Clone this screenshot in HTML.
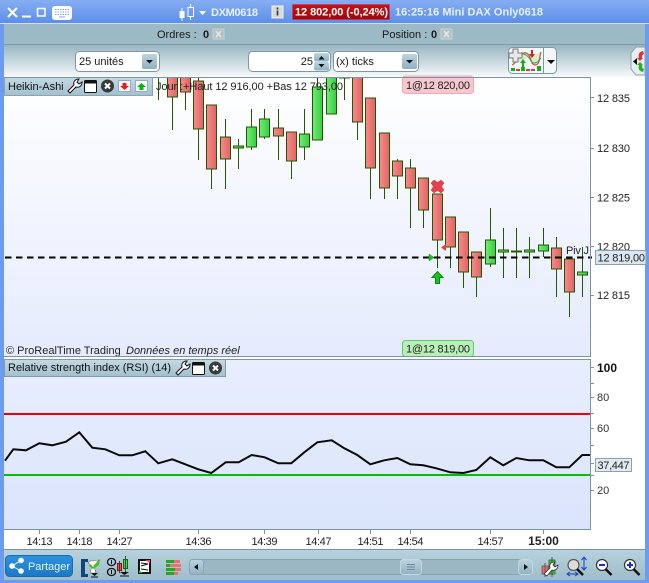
<!DOCTYPE html>
<html><head><meta charset="utf-8"><style>
html,body{margin:0;padding:0;background:#6b9cf0;overflow:hidden}
svg{display:block;font-family:"Liberation Sans",sans-serif}
text{white-space:pre}
</style></head><body>
<svg width="649" height="583" viewBox="0 0 649 583" xmlns="http://www.w3.org/2000/svg">
<defs>
<linearGradient id="top" x1="0" y1="0" x2="0" y2="1"><stop offset="0" stop-color="#86aef2"/><stop offset="1" stop-color="#5c8fea"/></linearGradient>
<linearGradient id="r3" x1="0" y1="0" x2="0" y2="1"><stop offset="0" stop-color="#9ab6c3"/><stop offset=".5" stop-color="#c6d7de"/><stop offset="1" stop-color="#f8fafb"/></linearGradient>
<linearGradient id="ch" x1="0" y1="0" x2="0" y2="1"><stop offset="0" stop-color="#ffffff"/><stop offset="1" stop-color="#e5ebfd"/></linearGradient>
<linearGradient id="rs" x1="0" y1="0" x2="0" y2="1"><stop offset="0" stop-color="#e8eefe"/><stop offset="1" stop-color="#dae4fb"/></linearGradient>
<linearGradient id="leg" x1="0" y1="0" x2="0" y2="1"><stop offset="0" stop-color="#c4dae4"/><stop offset="1" stop-color="#a2c0cd"/></linearGradient>
<linearGradient id="ft" x1="0" y1="0" x2="0" y2="1"><stop offset="0" stop-color="#b6d2de"/><stop offset="1" stop-color="#9ebcc9"/></linearGradient>
<linearGradient id="btn" x1="0" y1="0" x2="0" y2="1"><stop offset="0" stop-color="#bcd4df"/><stop offset="1" stop-color="#8fb1c2"/></linearGradient>
<linearGradient id="blu" x1="0" y1="0" x2="0" y2="1"><stop offset="0" stop-color="#2c93e0"/><stop offset="1" stop-color="#1c78c4"/></linearGradient>
<linearGradient id="R" x1="0" y1="0" x2="1" y2="0"><stop offset="0" stop-color="#fb8a8a"/><stop offset="1" stop-color="#dd6464"/></linearGradient>
<linearGradient id="G" x1="0" y1="0" x2="1" y2="0"><stop offset="0" stop-color="#74ec74"/><stop offset="1" stop-color="#35cc45"/></linearGradient>
<linearGradient id="pr" x1="0" y1="0" x2="0" y2="1"><stop offset="0" stop-color="#c41414"/><stop offset="1" stop-color="#9c0808"/></linearGradient>
<clipPath id="cc"><rect x="5" y="78" width="585" height="278"/></clipPath>
</defs>

<!-- frame -->
<rect width="649" height="583" fill="#6b9cf0"/>
<rect width="649" height="23" fill="url(#top)"/>
<rect x="0" y="23" width="649" height="1" fill="#cfe0f5"/>
<rect x="4" y="24" width="641" height="20" fill="#9cb9c6"/>
<rect x="4" y="44" width="641" height="1" fill="#7f9baa"/>
<rect x="4" y="45" width="641" height="32" fill="url(#r3)"/>
<rect x="4" y="77" width="641" height="473" fill="#fff"/>
<rect x="4" y="550" width="641" height="30" fill="url(#ft)"/>

<!-- title bar -->
<g stroke="#fff" fill="none">
<path d="M8 8l9 9M17 8l-9 9" stroke-width="2"/>
<path d="M22 16.500h9" stroke-width="2"/>
<rect x="37.500" y="8.500" width="7.500" height="7.500" stroke-width="1.500"/>
</g>
<rect x="52" y="6" width="20" height="14" rx="3" fill="#fff"/>
<path d="M55 9.500h14M55 12h14M55 14.500h14" stroke="#7ba4ec" stroke-width="1" stroke-dasharray="1.500 1"/>
<path d="M59 17h6" stroke="#7ba4ec"/>
<rect x="179.500" y="11" width="5" height="7" fill="#fff"/><path d="M182 8v13" stroke="#fff"/>
<rect x="188" y="7.500" width="5.500" height="9" fill="none" stroke="#fff"/><path d="M190.500 4v3M190.500 17v3" stroke="#fff"/>
<path d="M199 11h7l-3.500 4z" fill="#fff"/>
<text x="211" y="16" font-size="11" font-weight="bold" fill="#e8f0fc" textLength="47">DXM0618</text>
<rect x="272" y="6" width="11" height="12" fill="#d9d9d9" stroke="#f0f0f0"/>
<path d="M277.500 7.500v2M277.500 10.500v5" stroke="#333" stroke-width="1.600"/>
<rect x="292.500" y="4.500" width="97" height="15" fill="url(#pr)" stroke="#e26" stroke-opacity=".5"/>
<text x="295" y="15.500" font-size="11" font-weight="bold" fill="#fff" textLength="93">12 802,00 (-0,24%)</text>
<text x="395" y="15.500" font-size="11" font-weight="bold" fill="#e8f0fc" textLength="148">16:25:16 Mini DAX Only0618</text>

<!-- row 2 -->
<text x="157" y="38" font-size="11" fill="#1a1a1a">Ordres :</text>
<text x="203" y="38" font-size="11" font-weight="bold" fill="#1a1a1a">0</text>
<rect x="213" y="29" width="11" height="10" fill="#b4c0c2" stroke="#cdd3d3"/><path d="M216 31l5 6M221 31l-5 6" stroke="#dfe3e3" stroke-width="2"/>
<text x="382" y="38" font-size="11" fill="#1a1a1a">Position :</text>
<text x="431" y="38" font-size="11" font-weight="bold" fill="#1a1a1a">0</text>
<rect x="441" y="29" width="11" height="10" fill="#b4c0c2" stroke="#cdd3d3"/><path d="M444 31l5 6M449 31l-5 6" stroke="#dfe3e3" stroke-width="2"/>

<!-- row 3 -->
<rect x="75.500" y="51.500" width="84" height="20" rx="4" fill="#fff" stroke="#7f97a5"/>
<text x="79" y="65" font-size="11" fill="#1a1a1a">25 unités</text>
<rect x="142" y="54" width="15" height="15" rx="2" fill="url(#btn)"/><path d="M146 60h7l-3.500 3.500z" fill="#111"/>
<rect x="248.500" y="51.500" width="82" height="20" rx="4" fill="#fff" stroke="#7f97a5"/>
<text x="313" y="65" font-size="11" fill="#1a1a1a" text-anchor="end">25</text>
<rect x="314" y="53" width="15" height="8.500" rx="2" fill="url(#btn)"/><rect x="314" y="62" width="15" height="8.500" rx="2" fill="url(#btn)"/>
<path d="M318.500 59.500h6l-3-3.500zM318.500 64h6l-3 3.500z" fill="#111"/>
<rect x="333.500" y="51.500" width="85" height="20" rx="4" fill="#fff" stroke="#7f97a5"/>
<text x="336" y="65" font-size="11" fill="#1a1a1a">(x) ticks</text>
<rect x="402" y="54" width="15" height="15" rx="2" fill="url(#btn)"/><path d="M406 60h7l-3.500 3.500z" fill="#111"/>
<!-- indicator button -->
<rect x="508.500" y="47.500" width="48" height="26" rx="4" fill="#f4f7f8" stroke="#7f97a5"/>
<path d="M543.500 48v25" stroke="#7f97a5"/>
<path d="M547 60h8l-4 4z" fill="#111"/>
<rect x="511" y="68" width="4" height="3" fill="#16b016"/><rect x="516" y="69" width="4" height="2" fill="#e03a3a"/><rect x="521" y="67" width="4" height="4" fill="#16b016"/><rect x="526" y="69" width="4" height="2" fill="#e03a3a"/><rect x="531" y="69" width="4" height="2" fill="#e03a3a"/><rect x="537" y="66" width="4" height="5" fill="#16b016"/>
<path d="M512 65c5-2 8-14 14-12s4 12 9 12 4-7 6-13" fill="#c8e8b0" fill-opacity=".6" stroke="#d05050" stroke-width="1.200"/>
<path d="M513 62c6-6 8-10 13-7s5 9 9 8 4-3 6-5" fill="none" stroke="#30a030" stroke-width="1"/>
<path d="M513 49h5v4h4v5h-4v4h-5v-4h-4v-5h4z" fill="#e8e8e8" stroke="#777" stroke-width="1"/>
<path d="M522 67v-4h-2l3-4 3 4h-2v4z" fill="#10b010"/>
<path d="M531 50v4h-2l3 4 3-4h-2v-4z" fill="#e02020"/>
<!-- right-side tab -->
<path d="M645 47h-9l-5 6v16l5 6h9z" fill="#e8eef0" stroke="#8aa0ad"/>
<path d="M637 58v7l-4-3.500z" fill="#111"/>
<path d="M643 51c-4 1-5 3-4 7h-2l3 3 3-3h-1c0-2 0-3 2-4z" fill="#e03030"/>
<path d="M643 72c-4-1-5-3-4-7h-2l3-3 3 3h-1c0 2 0 3 2 4z" fill="#20b020"/>

<!-- chart area -->
<rect x="4" y="77" width="586" height="279" fill="url(#ch)"/>
<rect x="4" y="359" width="586" height="171" fill="url(#rs)"/>

<!-- candles -->
<g clip-path="url(#cc)" stroke="#235800" stroke-width="1" shape-rendering="crispEdges">
<path fill="none" d="M158.500 78v22M172.500 78v52M185.500 78v32M198.500 78v82M211.500 105v84M225.500 119v70M238.500 139v30M251.500 109v41M264.500 109v30M278.500 109v51M291.500 132v47M304.500 109v51M317.500 78v62M331.500 78v36M344.500 78v22M357.500 78v62M370.500 98v101M384.500 133v66M397.500 159v40M410.500 159v69M423.500 178v50M437.500 194v74M450.500 217v51M463.500 232v56M476.500 252v45M490.500 208v59M503.500 228v50M516.500 228v50M529.500 237v41M543.500 228v29M556.500 237v60M569.500 259v58M582.500 247v50"/>
<g fill="url(#R)">
<rect x="167.500" y="70" width="10" height="27"/><rect x="180.500" y="70" width="10" height="22"/><rect x="193.500" y="81" width="10" height="48"/><rect x="206.500" y="105" width="10" height="64"/><rect x="220.500" y="137" width="10" height="22"/><rect x="273.500" y="128" width="10" height="8"/><rect x="286.500" y="132" width="10" height="29"/><rect x="352.500" y="70" width="10" height="52"/><rect x="365.500" y="98" width="10" height="70"/><rect x="379.500" y="133" width="10" height="55"/><rect x="392.500" y="161" width="10" height="15"/><rect x="405.500" y="168" width="10" height="20"/><rect x="418.500" y="178" width="10" height="32"/><rect x="432.500" y="194" width="10" height="46"/><rect x="445.500" y="217" width="10" height="30"/><rect x="458.500" y="232" width="10" height="40"/><rect x="471.500" y="252" width="10" height="25"/><rect x="551.500" y="248" width="10" height="21"/><rect x="564.500" y="259" width="10" height="33"/>
</g>
<g fill="url(#G)">
<rect x="233.500" y="146" width="10" height="2"/><rect x="246.500" y="127" width="10" height="20"/><rect x="259.500" y="119" width="10" height="18"/><rect x="299.500" y="134" width="10" height="13"/><rect x="312.500" y="87" width="10" height="53"/><rect x="326.500" y="70" width="10" height="44"/><rect x="339.500" y="70" width="10" height="8"/><rect x="485.500" y="240" width="10" height="24"/><rect x="498.500" y="250" width="10" height="2"/><rect x="511.500" y="251" width="10" height="1"/><rect x="524.500" y="250" width="10" height="2"/><rect x="538.500" y="245" width="10" height="6"/><rect x="577.500" y="272" width="10" height="3"/>
</g>
</g>

<!-- dashed line, markers -->
<path d="M5 257.500H592" stroke="#000" stroke-width="2" stroke-dasharray="6.500 4.500"/>
<path d="M429 254l5 3.500-5 3.500z" fill="#20c020" stroke="#109010" stroke-width=".5"/>
<path d="M446 244l-5 3.500 5 3.500z" fill="#e04040"/>
<path d="M437.500 271.500l-5.500 6h3.500v6h4v-6h3.500z" fill="#14c414" stroke="#0a8a0a"/>
<path d="M434 180l3.500 2.500 3.500-2.500 3 3-2.500 3.500 2.500 3.500-3 3-3.500-2.500-3.500 2.500-3-3 2.500-3.500-2.500-3.500z" fill="#e8404a" stroke="#d02030" stroke-width=".5"/>
<text x="566" y="254" font-size="11" fill="#222" textLength="23">Piv J</text>

<!-- legend strip 1 -->
<rect x="4.500" y="77.500" width="148" height="18" fill="url(#leg)" stroke="#8ba4b2"/>
<text x="8" y="90" font-size="11" fill="#111">Heikin-Ashi</text>
<path d="M68 91l6-6c-1-3 1-6 5-6l-2 3 2 2 3-2c0 4-3 6-6 5l-6 6z" fill="#fff" stroke="#111"/>
<rect x="84.500" y="80.500" width="12" height="12" rx="1" fill="#fff" stroke="#111"/><rect x="84.500" y="80.500" width="12" height="3" fill="#111"/>
<circle cx="107.500" cy="86" r="6.500" fill="#3a3a3a"/><path d="M105 83.500l5 5M110 83.500l-5 5" stroke="#fff" stroke-width="2"/>
<rect x="118.500" y="80.500" width="12" height="11" fill="#f4f8f8" stroke="#9ab"/><path d="M122.500 83v3h-2.500l4.500 4 4.500-4h-2.500v-3z" fill="#e02020"/>
<rect x="135.500" y="80.500" width="12" height="11" fill="#f4f8f8" stroke="#9ab"/><path d="M139.500 90v-3h-2.500l4.500-4 4.500 4h-2.500v3z" fill="#10b010"/>
<text x="156" y="90" font-size="11" fill="#222" textLength="187">Jour :+Haut 12 916,00 +Bas 12 793,00</text>

<!-- order labels -->
<rect x="402.500" y="76" width="71" height="17.500" rx="3" fill="#f5c8cf" stroke="#f3a9b2"/>
<text x="406" y="89" font-size="11" fill="#222" textLength="64">1@12 820,00</text>
<rect x="402.500" y="340.500" width="71" height="16" rx="3" fill="#b9efb9" stroke="#62c862"/>
<text x="406" y="352.500" font-size="11" fill="#222" textLength="64">1@12 819,00</text>
<text x="6" y="354" font-size="11" fill="#222">© ProRealTime Trading</text>
<text x="126" y="354" font-size="11" font-style="italic" fill="#222">Données en temps réel</text>

<!-- frames -->
<g fill="none" stroke="#7a93a5" shape-rendering="crispEdges">
<path d="M4 77.500H590.500V356.500H4"/>
<path d="M4 359.500H590.500V529.500H4"/>
<path d="M590 97.500h4M590 148.500h4M590 197.500h4M590 246.500h4M590 295.500h4"/>
<path d="M590 367.500h4M590 383.500h4M590 397.500h4M590 413.500h4M590 428.500h4M590 445.500h4M590 475.500h4M590 490.500h4M590 463.500h4"/>
<path d="M39.500 530v4M79.500 530v4M119.500 530v4M198.500 530v4M264.500 530v4M318.500 530v4M370.500 530v4M410.500 530v4M490.500 530v4M543.500 530v4"/>
<path d="M4 549.500H645"/>
</g>

<!-- price axis -->
<g font-size="11" fill="#222">
<text x="597" y="102" textLength="33">12 835</text><text x="597" y="152" textLength="33">12 830</text><text x="597" y="201.500" textLength="33">12 825</text><text x="597" y="250.500" textLength="33">12 820</text><text x="597" y="299" textLength="33">12 815</text>
</g>
<rect x="595.500" y="250.500" width="50.500" height="14" fill="#dbe6f0" stroke="#8aa2b2"/>
<text x="597.500" y="261.500" font-size="11" fill="#222" textLength="47.500">12 819,00</text>

<!-- RSI -->
<rect x="4.500" y="359.500" width="221" height="17" fill="url(#leg)" stroke="#7f99a8"/>
<text x="8" y="371" font-size="11" fill="#111" textLength="163">Relative strength index (RSI) (14)</text>
<path d="M176 373l6-6c-1-3 1-6 5-6l-2 3 2 2 3-2c0 4-3 6-6 5l-6 6z" fill="#fff" stroke="#111"/>
<rect x="192.500" y="362.500" width="12" height="12" rx="1" fill="#fff" stroke="#111"/><rect x="192.500" y="362.500" width="12" height="3" fill="#111"/>
<circle cx="215.500" cy="368" r="6.500" fill="#3a3a3a"/><path d="M213 365.500l5 5M218 365.500l-5 5" stroke="#fff" stroke-width="2"/>
<rect x="4" y="413" width="586" height="2" fill="#f00000"/>
<rect x="4" y="474" width="586" height="2" fill="#00c000"/>
<polyline fill="none" stroke="#0a0a0a" stroke-width="2" points="5,460.700 13.300,449.300 26,450.300 39.300,443.300 52.300,445.300 66,441.700 79.300,432.300 92.300,447.700 105.300,449.300 119.300,455.300 132.300,455.300 145.300,451.300 158.300,463.300 172.300,459.300 185.300,464.300 198.300,469.300 211.300,473 225.700,462.300 238.700,462.300 251.700,455 264.700,457.300 278.300,463.300 291.300,463.300 304.300,452.300 317.300,442.300 331.700,440.300 344.300,448.300 357.300,455 370.300,464.300 384.300,460.300 397.300,458 410.300,464.300 423.300,465.300 436.300,468.300 450.300,472.300 463.300,473 476.300,470 490.300,457.300 503.300,465.300 516.300,458 529.300,460.300 543.300,460.300 556.300,467.300 569.300,467.300 582.300,455 590,455"/>
<text x="597" y="372" font-size="12" font-weight="bold" fill="#111">100</text>
<g font-size="11" fill="#333"><text x="597" y="401">80</text><text x="597" y="432">60</text><text x="597" y="494">20</text></g>
<rect x="595.500" y="458.500" width="36" height="13" fill="#e2eaf2" stroke="#8aa2b2"/>
<text x="597.500" y="469" font-size="11" fill="#222" textLength="32">37,447</text>

<!-- time axis -->
<g font-size="11" fill="#222" text-anchor="middle">
<text x="39.500" y="545" textLength="26">14:13</text><text x="79.500" y="545" textLength="26">14:18</text><text x="119.500" y="545" textLength="26">14:27</text><text x="198.500" y="545" textLength="26">14:36</text><text x="264.500" y="545" textLength="26">14:39</text><text x="318.500" y="545" textLength="26">14:47</text><text x="370.500" y="545" textLength="26">14:51</text><text x="410.500" y="545" textLength="26">14:54</text><text x="490.500" y="545" textLength="26">14:57</text>
<text x="543.500" y="545" font-size="12" font-weight="bold">15:00</text>
</g>

<!-- footer -->
<rect x="5.500" y="555.500" width="67" height="21" rx="4" fill="url(#blu)" stroke="#1a6cb0"/>
<g fill="#fff" stroke="#fff"><circle cx="12" cy="566" r="2.300"/><circle cx="21" cy="560.500" r="2.300"/><circle cx="21" cy="571" r="2.300"/><path d="M12 566l9-5.500M12 566l9 5"/></g>
<text x="28" y="570" font-size="11" fill="#e8f4fc" textLength="42">Partager</text>
<!-- footer icons -->
<path d="M88 559h-7v18h7v-3h-3v-12h3z" fill="#10457e"/>
<path d="M90 561l-2 2 4 3-2 7h6l-2-7 5-6z" fill="#fff" stroke="#666" stroke-width=".6"/>
<path d="M90 564l3 3 7-8-1 6-6 4-4-3z" fill="#3bc81c"/>
<path d="M91 573h7l-3.500 3z" fill="#111"/><path d="M91 577h7" stroke="#111"/>
<rect x="107.500" y="558.500" width="8" height="7" rx="3.500" fill="none" stroke="#111" stroke-width="1.300"/>
<rect x="107.500" y="568.500" width="8" height="7" rx="3.500" fill="none" stroke="#111" stroke-width="1.300"/>
<path d="M111.500 560v4M111.500 570v4" stroke="#111"/>
<rect x="117.500" y="563.500" width="4" height="7" fill="#e85050" stroke="#702020"/><path d="M119.500 561v12" stroke="#702020"/>
<rect x="123.500" y="559.500" width="4" height="9" fill="#40d040" stroke="#206020"/><path d="M125.500 556v17" stroke="#206020"/>
<path d="M120 572h9l-4.500 3z" fill="#111"/><path d="M120 576h9" stroke="#111"/>
<rect x="139" y="560" width="11" height="13" fill="#fff" stroke="#111" stroke-width="2"/>
<path d="M141 563l7 1M141 566l7-2M141 569l7 1" stroke="#111"/><path d="M145 560h5v3z" fill="#e05050"/><path d="M139 573v-3l4 3z" fill="#30b030"/>
<g shape-rendering="crispEdges">
<rect x="166" y="560" width="8" height="3" fill="#28a428"/><rect x="174" y="560" width="6" height="3" fill="#e87070"/>
<rect x="170" y="564" width="11" height="3" fill="#e87070"/>
<rect x="166" y="564" width="4" height="3" fill="#28a428"/>
<rect x="166" y="568" width="9" height="3" fill="#28a428"/><rect x="175" y="568" width="6" height="3" fill="#e87070"/>
<rect x="166" y="572" width="8" height="3" fill="#28a428"/><rect x="174" y="572" width="4" height="3" fill="#e87070"/>
</g>
<!-- scrollbar -->
<rect x="189.500" y="559.500" width="343" height="15" rx="3" fill="#9bb7c4" stroke="#88a3b0"/>
<rect x="189.500" y="559.500" width="14" height="15" rx="3" fill="url(#btn)" stroke="#8aa5b3"/><path d="M198 564v6l-4-3z" fill="#111"/>
<rect x="400.500" y="559.500" width="21" height="15" rx="3" fill="url(#btn)" stroke="#c4d8e0"/><path d="M407 564.500h8M407 567h8M407 569.500h8" stroke="#6d8a98"/>
<rect x="518.500" y="559.500" width="14" height="15" rx="3" fill="url(#btn)" stroke="#c4d8e0"/><path d="M524 564v6l4-3z" fill="#111"/>
<!-- right tools -->
<rect x="549" y="560" width="6" height="14" fill="#38c038" stroke="#406040" stroke-width=".8"/><path d="M552 557v20" stroke="#406040"/>
<rect x="542" y="566" width="6" height="8" fill="#e07070" stroke="#705050" stroke-width=".8"/><path d="M545 563v14" stroke="#705050"/>
<path d="M544 574l6-6c-1-4 1-6 5-6l-2 3 2 2 3-2c0 4-3 6-6 5l-5 6z" fill="#fff" stroke="#333" stroke-width=".8"/>
<circle cx="573.500" cy="565" r="5.500" fill="#ddd" stroke="#555" stroke-width="1.200"/>
<path d="M577 569l6 6" stroke="#111" stroke-width="2.500"/>
<path d="M584 558v11M581.500 560l2.500-3 2.500 3M581.500 567l2.500 3 2.500-3" stroke="#1040d0" fill="none"/>
<path d="M568 574h9M570 572l-3 2 3 2M575 572l3 2-3 2" stroke="#1040d0" fill="none"/>
<circle cx="602" cy="565" r="5.500" fill="#fff" stroke="#333" stroke-width="1.200"/><path d="M605.500 569l6 6" stroke="#111" stroke-width="2.500"/><path d="M599 565h6" stroke="#1030d0" stroke-width="2"/>
<circle cx="630" cy="565" r="5.500" fill="#fff" stroke="#333" stroke-width="1.200"/><path d="M633.500 569l6 6" stroke="#111" stroke-width="2.500"/><path d="M627 565h6M630 562v6" stroke="#1030d0" stroke-width="2"/>
</svg>
</body></html>
